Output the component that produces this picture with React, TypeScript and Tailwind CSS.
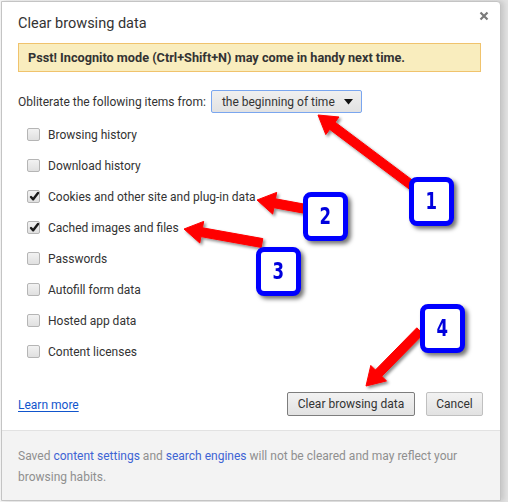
import React from "react";

type Pt = [number, number];

function arrowPoints(tail: Pt, tip: Pt, shaft = 4.5, head = 11, headLen = 18): string {
  const dx = tip[0] - tail[0];
  const dy = tip[1] - tail[1];
  const len = Math.hypot(dx, dy);
  const ux = dx / len;
  const uy = dy / len;
  const nx = -uy;
  const ny = ux;
  const bx = tip[0] - ux * headLen;
  const by = tip[1] - uy * headLen;
  const pts: Pt[] = [
    [tail[0] + nx * shaft, tail[1] + ny * shaft],
    [bx + nx * shaft, by + ny * shaft],
    [bx + nx * head, by + ny * head],
    [tip[0], tip[1]],
    [bx - nx * head, by - ny * head],
    [bx - nx * shaft, by - ny * shaft],
    [tail[0] - nx * shaft, tail[1] - ny * shaft],
  ];
  return pts.map((p) => `${p[0].toFixed(1)},${p[1].toFixed(1)}`).join(" ");
}

const arrows: { tail: Pt; tip: Pt }[] = [
  { tail: [414, 187], tip: [318, 115] },
  { tail: [306, 209], tip: [257, 200] },
  { tail: [262, 243], tip: [184, 229] },
  { tail: [420, 331], tip: [366, 386] },
];

const badges = [
  { n: "1", cls: "left-[409px] top-[177px]" },
  { n: "2", cls: "left-[303px] top-[192px]" },
  { n: "3", cls: "left-[256px] top-[247px]" },
  { n: "4", cls: "left-[420px] top-[304px]" },
];

function Checkbox({ checked }: { checked?: boolean }) {
  return (
    <div className="relative w-[13px] h-[13px] rounded-[2px] border border-[#b5b5b5] bg-gradient-to-b from-[#f2f2f2] to-[#e0e0e0] shrink-0">
      {checked && (
        <svg className="absolute left-[0px] top-[-1px]" width="13" height="13" viewBox="0 0 13 13">
          <path d="M3 7 L5.2 9.3 L10 3" fill="none" stroke="#1a1a1a" strokeWidth="2.4" strokeLinecap="round" strokeLinejoin="round" />
        </svg>
      )}
    </div>
  );
}

const items: { label: string; checked?: boolean }[] = [
  { label: "Browsing history" },
  { label: "Download history" },
  { label: "Cookies and other site and plug-in data", checked: true },
  { label: "Cached images and files", checked: true },
  { label: "Passwords" },
  { label: "Autofill form data" },
  { label: "Hosted app data" },
  { label: "Content licenses" },
];

export default function App() {
  return (
    <div className="relative w-[508px] h-[502px] bg-gradient-to-r from-[#f4f4f4] to-[#e2e2e2] overflow-hidden font-['Roboto',sans-serif]">
      <div className="ml-[1px] mt-[1px] w-[500px] h-[500px] border border-[#c4c4c4] rounded-tr-[4px] bg-white flex flex-col shadow-[3px_0_5px_rgba(0,0,0,0.12)] text-[#333]">
        {/* header */}
        <div className="relative shrink-0 h-[41px] pt-[10px] pl-[16px]">
          <div className="text-[14.5px] leading-[24px] text-[#333]">Clear browsing data</div>
          <svg className="absolute left-[477px] top-[9px]" width="10" height="10" viewBox="0 0 10 10">
            <path d="M1.5 1.5 L8.5 8.5 M8.5 1.5 L1.5 8.5" stroke="#7a7a7a" strokeWidth="2.2" />
          </svg>
        </div>
        {/* banner */}
        <div className="shrink-0 ml-[16px] w-[463px] h-[29px] border border-[#f0c36d] bg-[#f9edbe] flex items-center pl-[9px] text-[12.7px] font-bold text-[#333] whitespace-nowrap">
          Psst! Incognito mode (Ctrl+Shift+N) may come in handy next time.
        </div>
        {/* obliterate row */}
        <div className="shrink-0 mt-[18px] h-[23px] ml-[16px] flex items-center text-[12px] whitespace-nowrap">
          <span>Obliterate the following items from:</span>
          <div className="ml-[5px] w-[151px] h-[23px] border border-[#7aa6ef] rounded-[2px] bg-gradient-to-b from-[#f0f0f0] to-[#e2e2e2] flex items-center pl-[10px] pr-[8px] justify-between">
            <span className="text-[#333]">the beginning of time</span>
            <svg width="9" height="6" viewBox="0 0 9 6">
              <path d="M0 0 L9 0 L4.5 5.5 Z" fill="#111" />
            </svg>
          </div>
        </div>
        {/* list */}
        <div className="shrink-0 mt-[6px] flex flex-col">
          {items.map((it) => (
            <div key={it.label} className="h-[31px] flex items-center pl-[25px] text-[12px] whitespace-nowrap">
              <Checkbox checked={it.checked} />
              <span className="ml-[8px]">{it.label}</span>
            </div>
          ))}
        </div>
        {/* buttons */}
        <div className="shrink-0 mt-[25px] h-[24px] flex items-center pl-[16px] pr-[17px] text-[12px]">
          <a className="text-[#1155cc] underline underline-offset-2 mt-[1px]">Learn more</a>
          <div className="ml-auto flex gap-[11px]">
            <button className="w-[128px] h-[24px] border border-[#7d7d7d] rounded-[2px] bg-gradient-to-b from-[#f2f2f2] to-[#e2e2e2] text-[#333] text-[12px]">
              Clear browsing data
            </button>
            <button className="w-[57px] h-[24px] border border-[#c0c0c0] rounded-[2px] bg-gradient-to-b from-[#f2f2f2] to-[#e2e2e2] text-[#333] text-[12px]">
              Cancel
            </button>
          </div>
        </div>
        {/* footer */}
        <div className="mt-[14px] flex-1 min-h-0 border-t border-[#e2e2e2] bg-[#f3f3f3] pl-[16px] pt-[15px] text-[12px] leading-[21px] text-[#8f8f8f] whitespace-nowrap">
          Saved <span className="text-[#3e64d4]">content settings</span> and{" "}
          <span className="text-[#3e64d4]">search engines</span> will not be cleared and may reflect your
          <br />
          browsing habits.
        </div>
      </div>

      {/* annotations */}
      <svg className="absolute left-0 top-0" width="508" height="502" viewBox="0 0 508 502">
        <defs>
          <filter id="sh" x="-20%" y="-20%" width="140%" height="140%">
            <feDropShadow dx="2" dy="2" stdDeviation="1.5" floodColor="#000" floodOpacity="0.45" />
          </filter>
        </defs>
        {arrows.map((a, i) => (
          <polygon key={i} points={arrowPoints(a.tail, a.tip)} fill="#ff0000" filter="url(#sh)" strokeLinejoin="round" stroke="#ff0000" strokeWidth="1" />
        ))}
      </svg>
      {badges.map((b) => (
        <div
          key={b.n}
          className={`absolute ${b.cls} w-[45px] h-[49px] rounded-[8px] border-[5px] border-[#0000ff] bg-white flex items-center justify-center shadow-[3px_3px_4px_rgba(0,0,0,0.55)]`}
        >
          <span className="text-[23px] font-black text-[#0000dd] leading-none scale-x-[0.8] font-['DejaVu_Sans_Condensed','Liberation_Sans',sans-serif]">
            {b.n}
          </span>
        </div>
      ))}
    </div>
  );
}
